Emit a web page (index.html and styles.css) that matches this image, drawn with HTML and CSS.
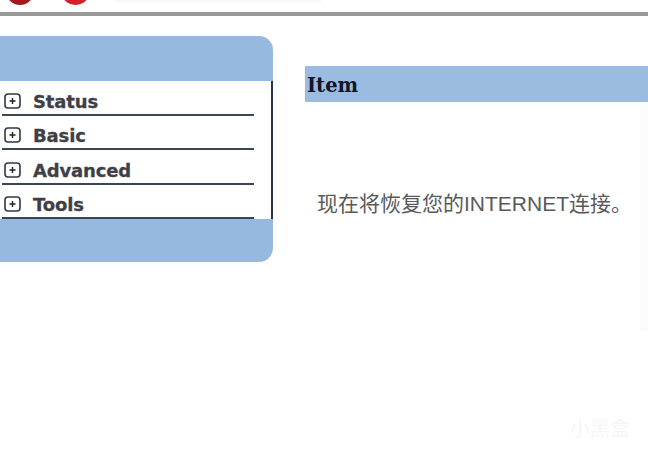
FILE: index.html
```html
<!DOCTYPE html>
<html lang="zh-CN">
<head>
    <meta charset="UTF-8">
    <meta name="viewport" content="width=device-width, initial-scale=1.0">
    <title>Router</title>
    <link rel="stylesheet" href="styles.css">
</head>
<body>
    <div class="page">
        <div class="header">
            <svg class="logo" width="100" height="12" viewBox="0 0 100 12">
                <circle cx="20" cy="-9" r="14" fill="#a01a20"/>
                <circle cx="75.5" cy="-10" r="15" fill="#d2222a"/>
            </svg>
            <div class="header-text"></div>
        </div>
        <div class="main">
            <div class="sidebar">
                <div class="side-cap side-cap-top"></div>
                <ul class="menu">
                    <li class="menu-item">
                        <svg class="plus-box" width="17" height="16" viewBox="0 0 17 16"><rect x="1" y="1" width="15" height="14" rx="3" fill="none" stroke="#2f3a46" stroke-width="1.6"/><path d="M5.5 8h6M8.5 5v6" stroke="#222" stroke-width="1.4" fill="none"/></svg>
                        Status
                    </li>
                    <li class="menu-item">
                        <svg class="plus-box" width="17" height="16" viewBox="0 0 17 16"><rect x="1" y="1" width="15" height="14" rx="3" fill="none" stroke="#2f3a46" stroke-width="1.6"/><path d="M5.5 8h6M8.5 5v6" stroke="#222" stroke-width="1.4" fill="none"/></svg>
                        Basic
                    </li>
                    <li class="menu-item">
                        <svg class="plus-box" width="17" height="16" viewBox="0 0 17 16"><rect x="1" y="1" width="15" height="14" rx="3" fill="none" stroke="#2f3a46" stroke-width="1.6"/><path d="M5.5 8h6M8.5 5v6" stroke="#222" stroke-width="1.4" fill="none"/></svg>
                        Advanced
                    </li>
                    <li class="menu-item">
                        <svg class="plus-box" width="17" height="16" viewBox="0 0 17 16"><rect x="1" y="1" width="15" height="14" rx="3" fill="none" stroke="#2f3a46" stroke-width="1.6"/><path d="M5.5 8h6M8.5 5v6" stroke="#222" stroke-width="1.4" fill="none"/></svg>
                        Tools
                    </li>
                </ul>
                <div class="side-cap side-cap-bottom"></div>
            </div>
            <div class="content">
                <div class="item-title">Item</div>
                <p class="message">现在将恢复您的INTERNET连接。</p>
            </div>
        </div>
        <div class="right-shade"></div>
        <div class="watermark">小黑盒</div>
    </div>
</body>
</html>
```
FILE: styles.css
```css
html, body {
    margin: 0;
    padding: 0;
    background-color: #fff;
}
.page {
    position: relative;
    width: 648px;
    height: 454px;
    overflow: hidden;
    font-family: "DejaVu Sans", sans-serif;
}
.header {
    display: flex;
    height: 12px;
    border-bottom: 4px solid #9a9a9a;
}
.logo {
    display: block;
    flex: none;
}
.header-text {
    width: 205px;
    height: 2px;
    margin-left: 16px;
    background-color: #f7f7f7;
}
.main {
    display: flex;
    padding-top: 20px;
}
.sidebar {
    width: 273px;
    flex: none;
}
.side-cap {
    background-color: #98b9df;
}
.side-cap-top {
    height: 45px;
    border-top-right-radius: 14px;
}
.side-cap-bottom {
    height: 43px;
    border-bottom-right-radius: 14px;
}
.menu {
    list-style: none;
    margin: 0;
    padding: 0 0 0 2px;
    border-right: 2px solid #2c3440;
}
.menu-item {
    display: flex;
    align-items: flex-end;
    box-sizing: border-box;
    width: 252px;
    height: 34.5px;
    border-bottom: 2px solid #3b4654;
    font-size: 18px;
    font-weight: bold;
    letter-spacing: -0.15px;
    line-height: 24px;
    color: #3f3f46;
    -webkit-text-stroke: 0.3px #3f3f46;
}
.plus-box {
    flex: none;
    margin: 0 12px 5px 2px;
}
.content {
    flex: 1;
    margin-left: 32px;
    padding-top: 30px;
}
.item-title {
    height: 36px;
    padding-left: 2px;
    background-color: #9bbbe1;
    font-family: "DejaVu Serif", serif;
    font-size: 19.5px;
    font-weight: bold;
    line-height: 39px;
    color: #12162a;
}
.message {
    margin: 86px 0 0 12px;
    font-family: "Liberation Sans", "Noto Sans CJK SC", sans-serif;
    font-size: 21px;
    line-height: 32px;
    white-space: nowrap;
    color: #5a5a5a;
}
.right-shade {
    position: absolute;
    top: 102px;
    right: 0;
    width: 8px;
    height: 229px;
    background-color: #fcfcfc;
}
.watermark {
    position: absolute;
    right: 18px;
    bottom: 12px;
    font-family: "Noto Sans CJK SC", sans-serif;
    font-size: 20px;
    color: #f6f6f6;
}
```
